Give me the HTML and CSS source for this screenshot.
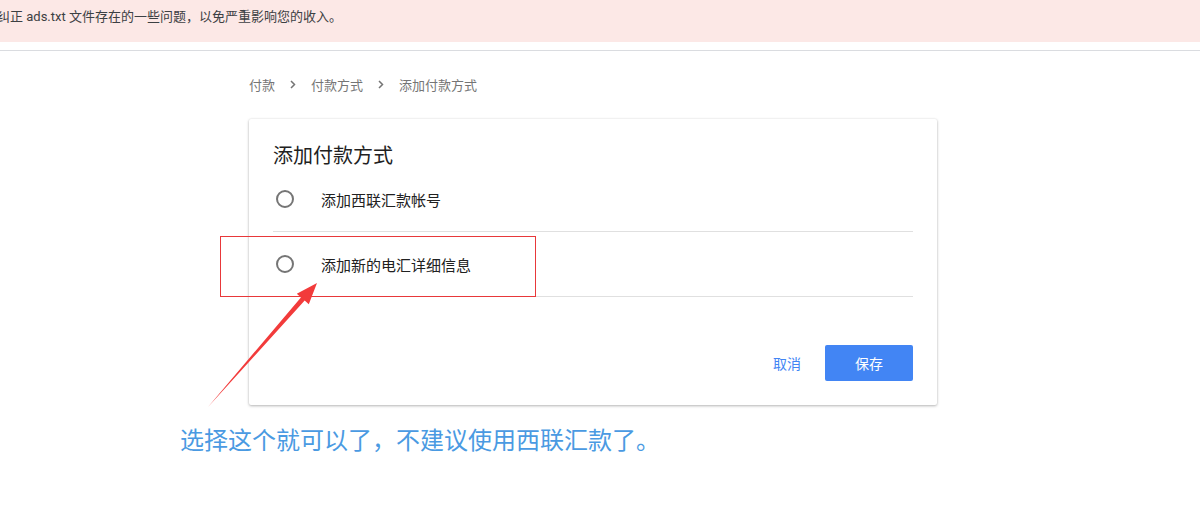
FILE: index.html
```html
<!DOCTYPE html>
<html>
<head>
    <title>添加付款方式</title>
    <link rel="stylesheet" href="styles.css">
</head>
<body>
    <div class="alert">纠正 ads.txt 文件存在的一些问题，以免严重影响您的收入。</div>
    <div class="rule"></div>

    <div class="content">
        <div class="crumbs">
            <span>付款</span>
            <svg class="chev" width="6" height="9" viewBox="0 0 6 9"><path d="M1 1l3.5 3.5L1 8" fill="none" stroke="#757575" stroke-width="1.5"/></svg>
            <span>付款方式</span>
            <svg class="chev" width="6" height="9" viewBox="0 0 6 9"><path d="M1 1l3.5 3.5L1 8" fill="none" stroke="#757575" stroke-width="1.5"/></svg>
            <span>添加付款方式</span>
        </div>

        <div class="card">
            <h2>添加付款方式</h2>
            <label class="option">
                <span class="radio"><span class="ring"></span></span>
                <span>添加西联汇款帐号</span>
            </label>
            <label class="option">
                <span class="radio"><span class="ring"></span></span>
                <span>添加新的电汇详细信息</span>
            </label>
            <div class="actions">
                <button class="text-btn">取消</button>
                <button class="primary">保存</button>
            </div>
        </div>
    </div>

    <!-- screenshot annotation -->
    <div class="mark-box"></div>
    <svg class="mark-arrow" width="1200" height="530" viewBox="0 0 1200 530">
        <polygon points="208,407 300.9,297.4 296.8,293.7 317,283 308.8,304.3 304.7,300.6" fill="#f23b3b"/>
    </svg>
    <div class="mark-note">选择这个就可以了，不建议使用西联汇款了。</div>
</body>
</html>
```

FILE: styles.css
```css
body {
    margin: 0;
    font-family: Roboto, "Noto Sans CJK SC", sans-serif;
    color: #212121;
    background: #fff;
    position: relative;
    height: 530px;
    overflow: hidden;
}
.alert {
    background: #fce8e6;
    height: 42px;
    box-sizing: border-box;
    padding-top: 8px;
    line-height: 18px;
    font-size: 13px;
    color: #3c4043;
    margin-left: -3px;
    white-space: nowrap;
}
.rule {
    height: 1px;
    background: #dadce0;
    margin-top: 8px;
}
.content {
    margin-left: 249px;
    width: 688px;
}
.crumbs {
    display: flex;
    align-items: center;
    height: 20px;
    margin-top: 23px;
    font-size: 13px;
    color: #757575;
}
.chev {
    margin: 0 15px;
}
.card {
    margin-top: 25px;
    background: #fff;
    border-radius: 2px;
    box-shadow: 0 1px 3px rgba(0,0,0,0.28), 0 0 2px rgba(0,0,0,0.08);
    padding: 0 24px 24px;
}
h2 {
    margin: 0;
    padding-top: 25px;
    font-size: 20px;
    font-weight: 400;
    line-height: 24px;
    margin-bottom: -1px;
    color: #212121;
}
.option {
    display: flex;
    align-items: center;
    gap: 24px;
    height: 64px;
    border-bottom: 1px solid #e0e0e0;
    font-size: 15px;
    color: #212121;
}
.radio {
    width: 24px;
    display: flex;
    justify-content: center;
}
.ring {
    width: 14px;
    height: 14px;
    border: 2px solid #757575;
    border-radius: 50%;
}
.actions {
    display: flex;
    justify-content: flex-end;
    align-items: center;
    gap: 16px;
    margin-top: 48px;
}
button {
    font-family: inherit;
    font-size: 14px;
    border: none;
    border-radius: 2px;
    cursor: pointer;
    height: 36px;
}
.text-btn {
    background: none;
    color: #4285f4;
    padding: 0 8px;
}
.primary {
    background: #4285f4;
    color: #fff;
    width: 88px;
}
.mark-box {
    position: absolute;
    left: 220px;
    top: 236px;
    width: 314px;
    height: 59px;
    border: 1px solid #e8383a;
}
.mark-arrow {
    position: absolute;
    left: 0;
    top: 0;
}
.mark-note {
    position: absolute;
    left: 180px;
    top: 425px;
    font-size: 24px;
    line-height: 32px;
    color: #4a9ae2;
    white-space: nowrap;
}
```
